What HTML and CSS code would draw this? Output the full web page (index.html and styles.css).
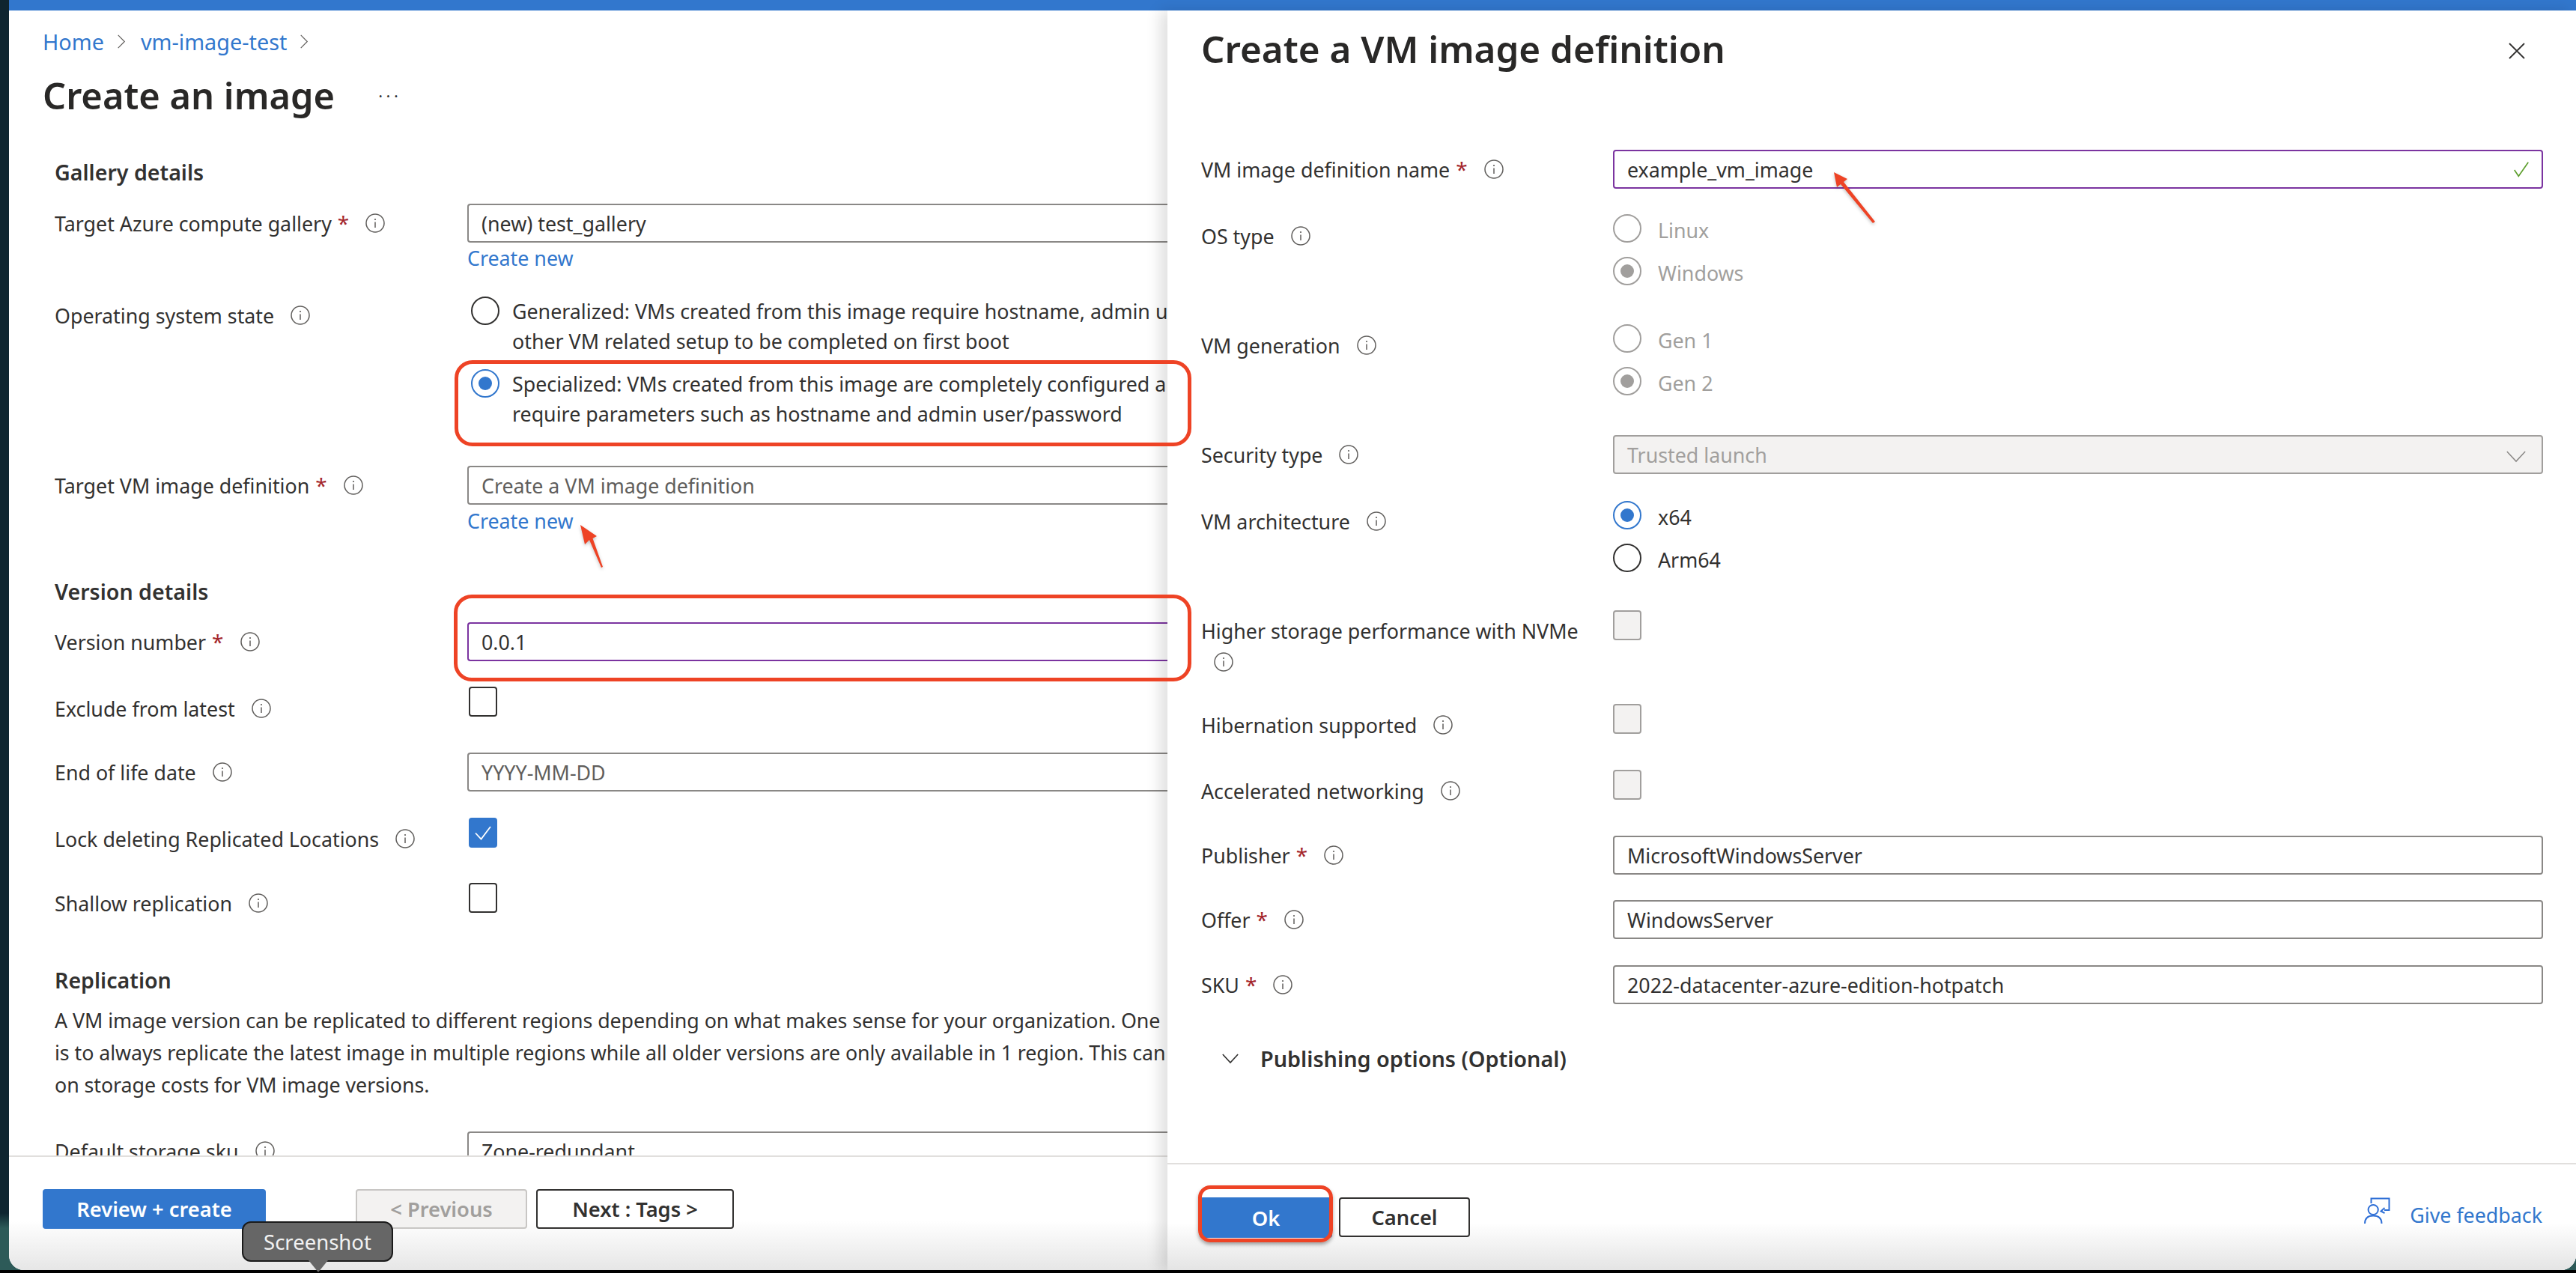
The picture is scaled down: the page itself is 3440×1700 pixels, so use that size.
FILE: index.html
```html
<!DOCTYPE html>
<html lang="en">
<head>
<meta charset="utf-8">
<title>Create an image</title>
<link rel="stylesheet" href="styles.css">
</head>
<body>
<svg class="defs" width="0" height="0" aria-hidden="true">
  <symbol id="info" viewBox="0 0 26 26">
    <circle cx="13" cy="13" r="12" fill="none" stroke="#605e5c" stroke-width="1.5"/>
    <circle cx="13" cy="8" r="1.1" fill="#605e5c"/>
    <path d="M13 11.5V19" stroke="#605e5c" stroke-width="1.5" fill="none"/>
  </symbol>
</svg>
<div class="screen">
  <div class="strip"></div>
  <div class="window">
    <div class="topbar"></div>
    <div class="workspace">
      <section class="blade">
        <div class="blade-scroll">
          <nav class="crumbs"><a>Home</a><svg class="crumb-sep" viewBox="0 0 14 24"><path d="M2 2l10 10L2 22" fill="none" stroke="#605e5c" stroke-width="1.4"/></svg><a>vm-image-test</a><svg class="crumb-sep" viewBox="0 0 14 24"><path d="M2 2l10 10L2 22" fill="none" stroke="#605e5c" stroke-width="1.4"/></svg></nav>
          <div class="page-title"><h1>Create an image</h1><span class="more">···</span></div>

          <h2 class="sec sec-gallery">Gallery details</h2>
          <div class="row r-gallery">
            <label>Target Azure compute gallery<b class="req">*</b><svg class="i"><use href="#info"/></svg></label>
            <div class="input">(new) test_gallery</div>
          </div>
          <a class="create create-1">Create new</a>

          <div class="row r-os">
            <label class="lab-os">Operating system state<svg class="i"><use href="#info"/></svg></label>
            <div class="opts">
              <div class="wide-opt"><span class="radio"></span><p>Generalized: VMs created from this image require hostname, admin u<br>other VM related setup to be completed on first boot</p></div>
              <div class="wide-opt spec"><span class="radio on"></span><p>Specialized: VMs created from this image are completely configured a<br>require parameters such as hostname and admin user/password</p></div>
            </div>
          </div>

          <div class="row r-def">
            <label>Target VM image definition<b class="req">*</b><svg class="i"><use href="#info"/></svg></label>
            <div class="input ph">Create a VM image definition</div>
          </div>
          <a class="create create-2">Create new</a>

          <h2 class="sec sec-version">Version details</h2>
          <div class="row r-ver">
            <label>Version number<b class="req">*</b><svg class="i"><use href="#info"/></svg></label>
            <div class="input focus">0.0.1</div>
          </div>
          <div class="row r-excl">
            <label>Exclude from latest<svg class="i"><use href="#info"/></svg></label>
            <span class="check c-excl"></span>
          </div>
          <div class="row r-eol">
            <label>End of life date<svg class="i"><use href="#info"/></svg></label>
            <div class="input ph">YYYY-MM-DD</div>
          </div>
          <div class="row r-lock">
            <label>Lock deleting Replicated Locations<svg class="i"><use href="#info"/></svg></label>
            <span class="check on c-lock"><svg viewBox="0 0 38 40"><path d="M9 20.5l7.5 8L29 12" fill="none" stroke="#fff" stroke-width="1.8"/></svg></span>
          </div>
          <div class="row r-shallow">
            <label>Shallow replication<svg class="i"><use href="#info"/></svg></label>
            <span class="check c-shallow"></span>
          </div>

          <h2 class="sec sec-repl">Replication</h2>
          <p class="desc">A VM image version can be replicated to different regions depending on what makes sense for your organization. One<br>is to always replicate the latest image in multiple regions while all older versions are only available in 1 region. This can<br>on storage costs for VM image versions.</p>
          <div class="row r-sku">
            <label>Default storage sku<svg class="i"><use href="#info"/></svg></label>
            <div class="input">Zone-redundant</div>
          </div>
        </div>
        <footer class="blade-foot">
          <button class="btn primary b-review">Review + create</button>
          <button class="btn disabled b-prev">&lt; Previous</button>
          <button class="btn b-next">Next : Tags &gt;</button>
        </footer>
      </section>

      <aside class="panel">
        <header class="panel-head">
          <h1>Create a VM image definition</h1>
          <svg class="close" viewBox="0 0 24 24"><path d="M2 2l20 20M22 2L2 22" fill="none" stroke="#323130" stroke-width="1.8"/></svg>
        </header>
        <div class="panel-form">
          <div class="row p-name">
            <label>VM image definition name<b class="req">*</b><svg class="i"><use href="#info"/></svg></label>
            <div class="input focus valid">example_vm_image<svg class="ok-tick" viewBox="0 0 26 26"><path d="M3 14l6 9L23 3" fill="none" stroke="#5c9e2c" stroke-width="1.8"/></svg></div>
          </div>
          <div class="row p-os">
            <label>OS type<svg class="i"><use href="#info"/></svg></label>
            <div class="rgroup muted"><div class="opt"><span class="radio off"></span>Linux</div><div class="opt"><span class="radio off on"></span>Windows</div></div>
          </div>
          <div class="row p-gen">
            <label>VM generation<svg class="i"><use href="#info"/></svg></label>
            <div class="rgroup muted"><div class="opt"><span class="radio off"></span>Gen 1</div><div class="opt"><span class="radio off on"></span>Gen 2</div></div>
          </div>
          <div class="row p-sec">
            <label>Security type<svg class="i"><use href="#info"/></svg></label>
            <div class="input select">Trusted launch<svg class="chev" viewBox="0 0 30 18"><path d="M2 2l13 14L28 2" fill="none" stroke="#8a8886" stroke-width="1.6"/></svg></div>
          </div>
          <div class="row p-arch">
            <label>VM architecture<svg class="i"><use href="#info"/></svg></label>
            <div class="rgroup"><div class="opt"><span class="radio on"></span>x64</div><div class="opt"><span class="radio"></span>Arm64</div></div>
          </div>
          <div class="row p-nvme">
            <label class="lab-nvme">Higher storage performance with NVMe<br><svg class="i i-wrap"><use href="#info"/></svg></label>
            <span class="check off"></span>
          </div>
          <div class="row p-hib">
            <label>Hibernation supported<svg class="i"><use href="#info"/></svg></label>
            <span class="check off"></span>
          </div>
          <div class="row p-accel">
            <label>Accelerated networking<svg class="i"><use href="#info"/></svg></label>
            <span class="check off"></span>
          </div>
          <div class="row p-pub">
            <label>Publisher<b class="req">*</b><svg class="i"><use href="#info"/></svg></label>
            <div class="input">MicrosoftWindowsServer</div>
          </div>
          <div class="row p-offer">
            <label>Offer<b class="req">*</b><svg class="i"><use href="#info"/></svg></label>
            <div class="input">WindowsServer</div>
          </div>
          <div class="row p-sku">
            <label>SKU<b class="req">*</b><svg class="i"><use href="#info"/></svg></label>
            <div class="input">2022-datacenter-azure-edition-hotpatch</div>
          </div>
          <div class="publish">
            <svg class="pub-chev" viewBox="0 0 26 16"><path d="M2 2l11 12L24 2" fill="none" stroke="#323130" stroke-width="1.8"/></svg>
            <h3>Publishing options (Optional)</h3>
          </div>
        </div>
        <footer class="panel-foot">
          <button class="btn primary b-ok">Ok</button>
          <button class="btn b-cancel">Cancel</button>
          <a class="feedback">
            <svg viewBox="0 0 35 35"><path d="M9.5 8V1.500H33.500V17H27M27.500 14L22.500 18.500 27.500 21" fill="none" stroke="#2f6fd6" stroke-width="2"/><circle cx="12.200" cy="16.500" r="6.600" fill="none" stroke="#2f6fd6" stroke-width="2"/><path d="M1 35c0-6 3-10.500 11.200-10.500S23.500 29 23.500 35" fill="none" stroke="#2f6fd6" stroke-width="2"/></svg>
            <span class="fb-text">Give feedback</span>
          </a>
        </footer>
      </aside>
    </div>
  </div>
</div>

<div class="mark mark-spec"></div>
<div class="mark mark-ver"></div>
<div class="mark mark-ok"></div>
<svg class="arrow arrow-new" viewBox="0 0 40 64"><path d="M5 4L27 19 21.500 22 35 60 33 61 17 24 11 30Z" fill="#ee4325"/></svg>
<svg class="arrow arrow-name" viewBox="0 0 60 74"><path d="M3 3L21 12 16 16 58 69 55 71 12 19 7 23Z" fill="#ee4325"/></svg>
<div class="tip">Screenshot</div>
</body>
</html>
```

FILE: styles.css
```css
* { box-sizing: border-box; }
html, body { margin: 0; padding: 0; }
body {
  position: relative;
  width: 3440px;
  height: 1700px;
  overflow: hidden;
  background: #000;
  font-family: "Noto Sans", "Open Sans", sans-serif;
  font-size: 26.8px;
  color: #323130;
}
.defs { position: absolute; }
.screen { display: flex; height: 1696px; background: linear-gradient(#0f2530 0 1620px, #2d5a58 1640px); }
.strip { width: 12px; flex: none; }
.window {
  flex: 1;
  min-width: 0;
  display: flex;
  flex-direction: column;
  background: #fff;
  border-radius: 0 0 20px 20px;
  overflow: hidden;
}
.topbar { height: 14px; flex: none; background: #3277cd; }
.workspace { flex: 1; display: flex; min-height: 0; }

/* left blade */
.blade { width: 1547px; flex: none; display: flex; flex-direction: column; min-height: 0; overflow: hidden; }
.blade-scroll { height: 1529px; flex: none; overflow: hidden; padding: 21px 0 0 0; }
.crumbs { height: 40px; display: flex; align-items: center; padding-left: 45px; color: #3277cd; font-size: 28.8px; }
.crumb-sep { width: 12px; height: 21px; margin: 0 20px 0 17px; }
.page-title { height: 60px; margin-top: 22px; padding-left: 45px; display: flex; align-items: center; }
.page-title h1, .panel-head h1 { margin: 0; font-size: 48.8px; font-weight: 600; line-height: 60px; color: #292827; white-space: nowrap; }
.panel-head h1 { font-size: 49.4px; }
.more { margin-left: 58px; font-size: 22px; color: #323130; letter-spacing: 4.5px; }

.sec { margin: 0 0 0 61px; height: 40px; line-height: 40px; font-size: 28.6px; font-weight: 600; color: #323130; }
.sec-gallery { margin-top: 53px; }
.sec-version { margin-top: 56px; }
.sec-repl { margin-top: 57px; }

.row { display: grid; grid-template-columns: 550px 1fr; align-items: center; }
.blade .row { padding-left: 61px; grid-template-columns: 550px 1fr; }
label { display: flex; align-items: center; white-space: nowrap; height: 40px; }
.req { color: #a4262c; font-weight: 400; margin-left: 8px; font-size: 28px; }
.i { width: 26px; height: 26px; margin-left: 22px; flex: none; }

.input {
  height: 52px;
  border: 2px solid #8a8886;
  border-radius: 4px;
  padding: 0 17px;
  display: flex;
  align-items: center;
  white-space: nowrap;
  background: #fff;
}
.blade .input { margin-left: 1px; border-right: 0; border-radius: 4px 0 0 4px; }
.input.ph { color: #605e5c; }
.input.focus { border-color: #7b34a0; }
.input.select { background: #f3f2f1; border-color: #a19f9d; color: #a19f9d; position: relative; }
.input.valid { justify-content: space-between; }
.ok-tick { width: 24px; height: 24px; margin-right: -2px; }
.chev { position: absolute; right: 20px; top: 18px; width: 28px; height: 17px; }

.create { display: block; color: #3277cd; margin-left: 612px; height: 36px; line-height: 36px; }
.create-1 { margin-top: 3px; }
.create-2 { margin-top: 4px; }

.r-gallery { margin-top: 22px; }
.r-os { margin-top: 33px; align-items: start; }
.lab-os { margin-top: 5px; }
.opts { margin-left: 3px; }
.wide-opt { display: flex; white-space: nowrap; height: 80px; }
.wide-opt.spec { margin-top: 17px; }
.wide-opt p { margin: 0 0 0 17px; line-height: 40px; }
.r-def { margin-top: 49px; }
.r-ver { margin-top: 21px; }
.r-excl { margin-top: 36px; height: 54px; }
.r-eol { margin-top: 32px; }
.r-lock { margin-top: 37px; height: 52px; }
.r-shallow { margin-top: 34px; height: 52px; }
.c-excl { margin-top: -18px; }
.c-lock { margin-top: -16px; }
.c-shallow { margin-top: -15px; }
.blade .check, .blade .radio { margin-left: 3px; }
.desc { margin: 12px 0 0 61px; line-height: 43px; white-space: nowrap; letter-spacing: -0.06px; }
.r-sku { margin-top: 41px; }

.radio {
  width: 38px;
  height: 38px;
  flex: none;
  border: 2px solid #323130;
  border-radius: 50%;
  display: block;
  position: relative;
  background: #fff;
}
.radio.on { border-color: #3277cd; }
.radio.on::after {
  content: "";
  position: absolute;
  inset: 8px;
  border-radius: 50%;
  background: #3277cd;
}
.radio.off { border-color: #a19f9d; }
.radio.off.on::after { background: #a19f9d; }

.check {
  display: block;
  width: 38px;
  height: 40px;
  border: 2px solid #323130;
  border-radius: 4px;
  background: #fff;
}
.check svg { display: block; width: 100%; height: 100%; }
.check.on { border-color: #3277cd; background: #3277cd; }
.check.on svg { margin: -2px; width: 38px; height: 40px; }
.check.off { border-color: #a19f9d; background: #f3f2f1; }

.btn {
  height: 53px;
  border: 2px solid #323130;
  border-radius: 4px;
  background: #fff;
  color: #323130;
  font: 600 27.3px "Noto Sans", sans-serif;
  padding: 0;
}
.btn.primary { background: #3277cd; border-color: #3277cd; color: #fff; }
.btn.disabled { background: #f3f2f1; border-color: #c8c6c4; color: #a19f9d; }

.blade-foot {
  height: 153px;
  flex: none;
  border-top: 2px solid #e1dfdd;
  padding: 43px 0 0 45px;
  display: flex;
  align-items: flex-start;
  background: linear-gradient(#fff 0 85px, #e6e6e6 100%);
}
.b-review { width: 298px; }
.b-prev { width: 229px; margin-left: 120px; }
.b-next { width: 264px; margin-left: 12px; }

/* right panel */
.panel {
  flex: 1;
  min-width: 0;
  display: flex;
  flex-direction: column;
  background: #fff;
  box-shadow: -10px 0 18px rgba(0,0,0,.12);
  position: relative;
}
.panel-head { height: 81px; margin-top: 21px; padding: 0 44px 0 45px; display: flex; justify-content: space-between; align-items: flex-start; flex: none; }
.panel-head h1 { line-height: 60px; }
.close { width: 24px; height: 24px; margin: 21px 23px 0 0; }
.panel-form { flex: 1; padding: 0 44px 0 45px; min-height: 0; }
.panel-form .row { grid-template-columns: 550px 1fr; }
.p-name { margin-top: 84px; }
.p-os, .p-gen, .p-arch, .p-nvme, .p-hib, .p-accel { align-items: start; }
.p-os { margin-top: 34px; }
.p-gen { margin-top: 52px; }
.p-sec { margin-top: 53px; }
.p-arch { margin-top: 36px; }
.p-nvme { margin-top: 51px; height: 85px; }
.p-hib { margin-top: 40px; height: 56px; }
.p-accel { margin-top: 32px; height: 56px; }
.p-pub { margin-top: 32px; }
.p-offer { margin-top: 34px; }
.p-sku { margin-top: 35px; }
.p-os label { margin-top: 9px; }
.p-gen label { margin-top: 8px; }
.p-arch label { margin-top: 7px; }
.p-hib label, .p-accel label { margin-top: 8px; }
.lab-nvme { display: block; height: auto; line-height: 38px; margin-top: 9px; white-space: nowrap; }
.i-wrap { margin-left: 17px; vertical-align: middle; }
.rgroup { display: flex; flex-direction: column; gap: 19px; }
.rgroup.muted { color: #a19f9d; }
.opt { display: flex; align-items: flex-start; height: 38px; line-height: 44px; }
.opt .radio { margin-right: 22px; }
.rgroup, .panel-form .check { margin-left: 0; }
.publish { display: flex; align-items: center; height: 40px; margin-top: 52px; padding-left: 27px; }
.pub-chev { width: 24px; height: 15px; }
.publish h3 { margin: 0 0 0 28px; font-size: 28.8px; font-weight: 600; }
.panel-foot {
  height: 143px;
  flex: none;
  border-top: 2px solid #e1dfdd;
  padding: 44px 45px 0 43px;
  display: flex;
  align-items: flex-start;
  background: linear-gradient(#fff 0 78px, #e4e4e4 100%);
}
.b-ok { width: 177px; height: 54px; }
.b-cancel { width: 175px; margin-left: 9px; }
.feedback { margin-left: auto; display: flex; align-items: flex-start; color: #3277cd; white-space: nowrap; gap: 26px; }
.feedback svg { width: 35px; height: 35px; }
.fb-text { line-height: 40px; margin-top: 4px; }

/* annotations */
.mark { position: absolute; border: 5px solid #ee4325; border-radius: 24px; }
.mark-spec { left: 607px; top: 481px; width: 984px; height: 115px; }
.mark-ver { left: 606px; top: 794px; width: 985px; height: 116px; }
.mark-ok { left: 1600px; top: 1583px; width: 180px; height: 76px; border-radius: 16px; box-shadow: 0 3px 5px rgba(0,0,0,.35); }
.arrow { position: absolute; filter: drop-shadow(0 2px 2px rgba(0,0,0,.25)); }
.arrow-new { left: 770px; top: 697px; width: 40px; height: 64px; }
.arrow-name { left: 2446px; top: 227px; width: 60px; height: 74px; }
.tip {
  position: absolute;
  left: 323px;
  top: 1631px;
  width: 202px;
  height: 54px;
  background: #666;
  border: 2px solid #1a1a1a;
  border-radius: 12px;
  color: #f2f2f2;
  font-size: 27.5px;
  display: flex;
  align-items: center;
  justify-content: center;
}
.tip::after {
  content: "";
  position: absolute;
  left: 87px;
  top: 50px;
  border: 13px solid transparent;
  border-top: 16px solid #666;
}
```
